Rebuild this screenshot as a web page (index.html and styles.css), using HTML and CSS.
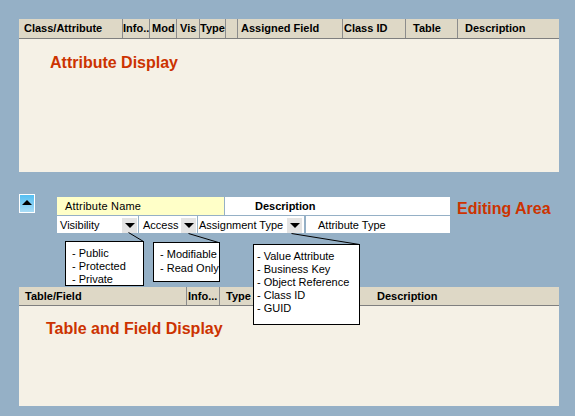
FILE: index.html
```html
<!doctype html>
<html lang="en">
    <head>
        <meta charset="utf-8">
        <meta name="viewport" content="width=device-width, initial-scale=1.0"/>
        <title>Class mapping layout</title>
		<link rel="stylesheet" href="styles.css">
    </head>
    <body>
		<div class="page">

			<!-- class / attribute list -->
			<div class="grid attr-grid">
				<div class="grid-head">
					<div class="col">Class/Attribute</div>
					<div class="col">Info..</div>
					<div class="col">Mod</div>
					<div class="col">Vis</div>
					<div class="col">Type</div>
					<div class="col"></div>
					<div class="col">Assigned Field</div>
					<div class="col">Class ID</div>
					<div class="col">Table</div>
					<div class="col">Description</div>
				</div>
				<div class="grid-body">
					<div class="area-label">Attribute Display</div>
				</div>
			</div>

			<!-- editor for the selected attribute -->
			<div class="editor">
				<button class="collapse"><span class="arrow-up"></span></button>
				<div class="form">
					<div class="form-row">
						<div class="cell name">Attribute Name</div>
						<div class="cell desc">Description</div>
					</div>
					<div class="form-row">
						<div class="cell vis">Visibility<span class="drop"></span></div>
						<div class="cell access">Access<span class="drop"></span></div>
						<div class="cell assign">Assignment Type<span class="drop"></span></div>
						<div class="cell atype">Attribute Type</div>
					</div>
				</div>
				<div class="editor-label">Editing Area</div>
			</div>

			<!-- table / field list -->
			<div class="grid field-grid">
				<div class="grid-head">
					<div class="col">Table/Field</div>
					<div class="col">Info...</div>
					<div class="col">Type</div>
					<div class="col">Description</div>
				</div>
				<div class="grid-body">
					<div class="area-label">Table and Field Display</div>
				</div>
			</div>

			<!-- dropdown choices -->
			<svg class="links" width="575" height="416">
				<line x1="128.5" y1="232.5" x2="143.5" y2="241.5"/>
				<line x1="188.5" y1="233.5" x2="218.5" y2="242.5"/>
				<line x1="291.5" y1="233.5" x2="359.5" y2="244.5"/>
			</svg>
			<div class="choices vis-choices">
				<div>- Public</div>
				<div>- Protected</div>
				<div>- Private</div>
			</div>
			<div class="choices access-choices">
				<div>- Modifiable</div>
				<div>- Read Only</div>
			</div>
			<div class="choices assign-choices">
				<div>- Value Attribute</div>
				<div>- Business Key</div>
				<div>- Object Reference</div>
				<div>- Class ID</div>
				<div>- GUID</div>
			</div>
		</div>
    </body>
</html>
```

FILE: styles.css
```css
/*----- Reset -----*/

*{
	box-sizing: border-box;
}

html, body{
	height: 100%;
	padding: 0;
	margin: 0;
	font-family: "Liberation Sans", Arial, sans-serif;
	font-size: 11px;
	color: #000;
}

body{
	background-color: #95b0c6;
}

.page{
	position: relative;
	padding: 19px 16px 0 19px;
}

/*----- grids -----*/

.grid{
	display: flex;
	flex-direction: column;
	background-color: #f5f1e6;
}

.attr-grid{
	height: 153px;
}

.field-grid{
	height: 119px;
	margin-top: 54px;
}

.grid-head{
	display: flex;
	flex: none;
	height: 20px;
	background-color: #ded8c6;
	border-bottom: 1px solid #7f7f7f;
}

.field-grid .grid-head{
	height: 19px;
}

.col{
	flex: none;
	font-weight: bold;
	line-height: 19px;
	white-space: nowrap;
	overflow: hidden;
	border-left: 1px solid #8c8c8c;
}

.field-grid .col{
	line-height: 18px;
}

.col:first-child{
	border-left: none;
}

.col:last-child{
	flex: 1;
}

/* class / attribute columns */
.attr-grid .col:nth-child(1){ width: 103px; padding-left: 5px; }
.attr-grid .col:nth-child(2){ width: 27px; padding-left: 0; }
.attr-grid .col:nth-child(3){ width: 27px; padding-left: 2px; }
.attr-grid .col:nth-child(4){ width: 23px; padding-left: 3px; }
.attr-grid .col:nth-child(5){ width: 26px; padding-left: 0; }
.attr-grid .col:nth-child(6){ width: 12px; }
.attr-grid .col:nth-child(7){ width: 105px; padding-left: 3px; }
.attr-grid .col:nth-child(8){ width: 63px; padding-left: 1px; }
.attr-grid .col:nth-child(9){ width: 52px; padding-left: 7px; }
.attr-grid .col:nth-child(10){ padding-left: 7px; }

/* table / field columns */
.field-grid .col:nth-child(1){ width: 167px; padding-left: 6px; }
.field-grid .col:nth-child(2){ width: 33px; padding-left: 1px; }
.field-grid .col:nth-child(3){ width: 139px; padding-left: 6px; }
.field-grid .col:nth-child(4){ padding-left: 18px; }

.grid-body{
	flex: 1;
}

.area-label{
	font-size: 16px;
	font-weight: bold;
	line-height: 18px;
	color: #cc3300;
}

.attr-grid .area-label{
	padding: 15px 0 0 31px;
}

.field-grid .area-label{
	padding: 14px 0 0 27px;
}

/*----- editor -----*/

.editor{
	display: flex;
	align-items: flex-start;
	margin-top: 22px;
}

.collapse{
	flex: none;
	width: 16px;
	height: 19px;
	padding: 0;
	border: 1px solid #fff;
	background: linear-gradient(#55bff2, #a9dcf6);
	display: flex;
	align-items: center;
	justify-content: center;
}

.arrow-up{
	width: 0;
	height: 0;
	border-left: 5px solid transparent;
	border-right: 5px solid transparent;
	border-bottom: 5px solid #000;
	margin-top: -2px;
}

.form{
	width: 393px;
	margin: 3px 0 0 22px;
	display: flex;
	flex-direction: column;
	gap: 1px;
}

.form-row{
	display: flex;
	gap: 1px;
	height: 18px;
}

.form-row + .form-row{
	height: 17px;
}

.cell{
	display: flex;
	align-items: center;
	background-color: #fff;
	white-space: nowrap;
}

.name{ width: 167px; padding-left: 8px; background-color: #ffffc8; letter-spacing: 0.2px; }
.desc{ flex: 1; padding-left: 30px; font-weight: bold; }
.vis{ width: 81px; padding-left: 3px; }
.access{ width: 58px; padding-left: 4px; }
.assign{ width: 106px; padding-left: 1px; }
.atype{ flex: 1; margin-left: 1px; padding-left: 12px; }

.drop{
	align-self: flex-end;
	flex: none;
	width: 15px;
	height: 15px;
	margin: 0 1px 0 auto;
	background-color: #e4e4e4;
	position: relative;
}

.assign .drop{
	margin-right: 2px;
}

.drop::after{
	content: "";
	position: absolute;
	left: 3px;
	top: 5px;
	border-left: 5px solid transparent;
	border-right: 5px solid transparent;
	border-top: 5px solid #000;
}

.editor-label{
	margin: 6px 0 0 7px;
	font-size: 16px;
	font-weight: bold;
	color: #cc3300;
}

/*----- choice popups -----*/

.links{
	position: absolute;
	left: 0;
	top: 0;
	pointer-events: none;
}

.links line{
	stroke: #000;
	stroke-width: 1;
}

.choices{
	position: absolute;
	background-color: #fff;
	border: 1px solid #000;
	line-height: 13px;
	white-space: nowrap;
}

.vis-choices{
	left: 65px;
	top: 241px;
	width: 79px;
	height: 45px;
	padding: 5px 0 0 6px;
}

.access-choices{
	left: 153px;
	top: 242px;
	width: 67px;
	height: 40px;
	padding: 4px 0 0 6px;
	line-height: 14px;
}

.assign-choices{
	left: 253px;
	top: 244px;
	width: 107px;
	height: 81px;
	padding: 5px 0 0 3px;
}
```
